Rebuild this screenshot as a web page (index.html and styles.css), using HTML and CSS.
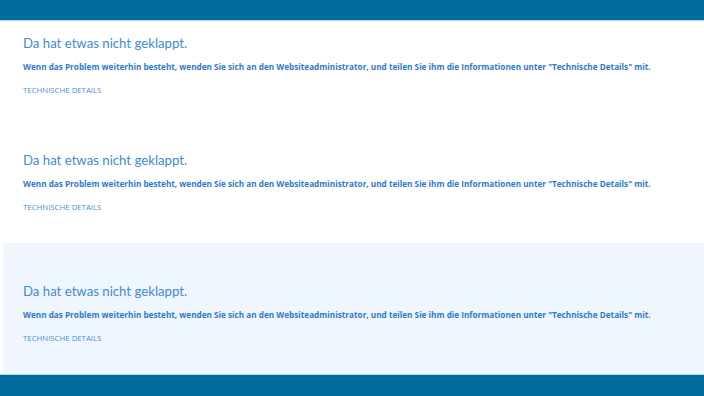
FILE: index.html
```html
<!DOCTYPE html>
<html lang="de">
<head>
    <meta charset="UTF-8">
    <meta name="viewport" content="width=device-width, initial-scale=1.0">
    <title>Fehler</title>
    <link rel="stylesheet" href="styles.css">
</head>
<body>
    <div class="topbar"></div>

    <div class="content">
        <div class="panel first">
            <h2 class="title">Da hat etwas nicht geklappt.</h2>
            <p class="message">Wenn das Problem weiterhin besteht, wenden Sie sich an den Websiteadministrator, und teilen Sie ihm die Informationen unter "Technische Details" mit.</p>
            <a class="details" href="#">TECHNISCHE DETAILS</a>
        </div>
        <div class="panel second">
            <h2 class="title">Da hat etwas nicht geklappt.</h2>
            <p class="message">Wenn das Problem weiterhin besteht, wenden Sie sich an den Websiteadministrator, und teilen Sie ihm die Informationen unter "Technische Details" mit.</p>
            <a class="details" href="#">TECHNISCHE DETAILS</a>
        </div>
        <div class="panel third">
            <h2 class="title">Da hat etwas nicht geklappt.</h2>
            <p class="message">Wenn das Problem weiterhin besteht, wenden Sie sich an den Websiteadministrator, und teilen Sie ihm die Informationen unter "Technische Details" mit.</p>
            <a class="details" href="#">TECHNISCHE DETAILS</a>
        </div>
    </div>

    <div class="bottombar"></div>
</body>
</html>
```

FILE: styles.css
```css
body {
    margin: 0;
    font-family: 'Open Sans', 'Noto Sans', sans-serif;
    background-color: #ffffff;
    color: #2f7bd2;
    height: 396px;
    display: flex;
    flex-direction: column;
    overflow: hidden;
}
.topbar {
    height: 20px;
    background-color: #006c9b;
    border-bottom: 1px solid #a9dcf2;
}
.bottombar {
    height: 21px;
    background-color: #006c9b;
    border-top: 1px solid #a9dcf2;
}
.content {
    flex: 1;
    display: flex;
    flex-direction: column;
}
.panel {
    padding-left: 23px;
}
.first {
    padding-top: 12px;
    height: 105px;
}
.second {
    padding-top: 12px;
    height: 93px;
}
.third {
    flex: 1;
    margin-left: 3px;
    padding-left: 20px;
    padding-top: 38px;
    background-color: #eff6fd;
}
.title {
    margin: 0;
    font-family: 'Lato', 'Open Sans', sans-serif;
    font-size: 13.2px;
    font-weight: 400;
    line-height: 20px;
    color: #3f8ad6;
}
.message {
    margin: 7px 0 0;
    font-size: 8.2px;
    font-weight: bold;
    line-height: 14px;
    color: #2e78d0;
}
.details {
    display: block;
    margin-top: 10px;
    font-size: 7.8px;
    line-height: 12px;
    color: #4c8fd2;
    text-decoration: none;
}
```
